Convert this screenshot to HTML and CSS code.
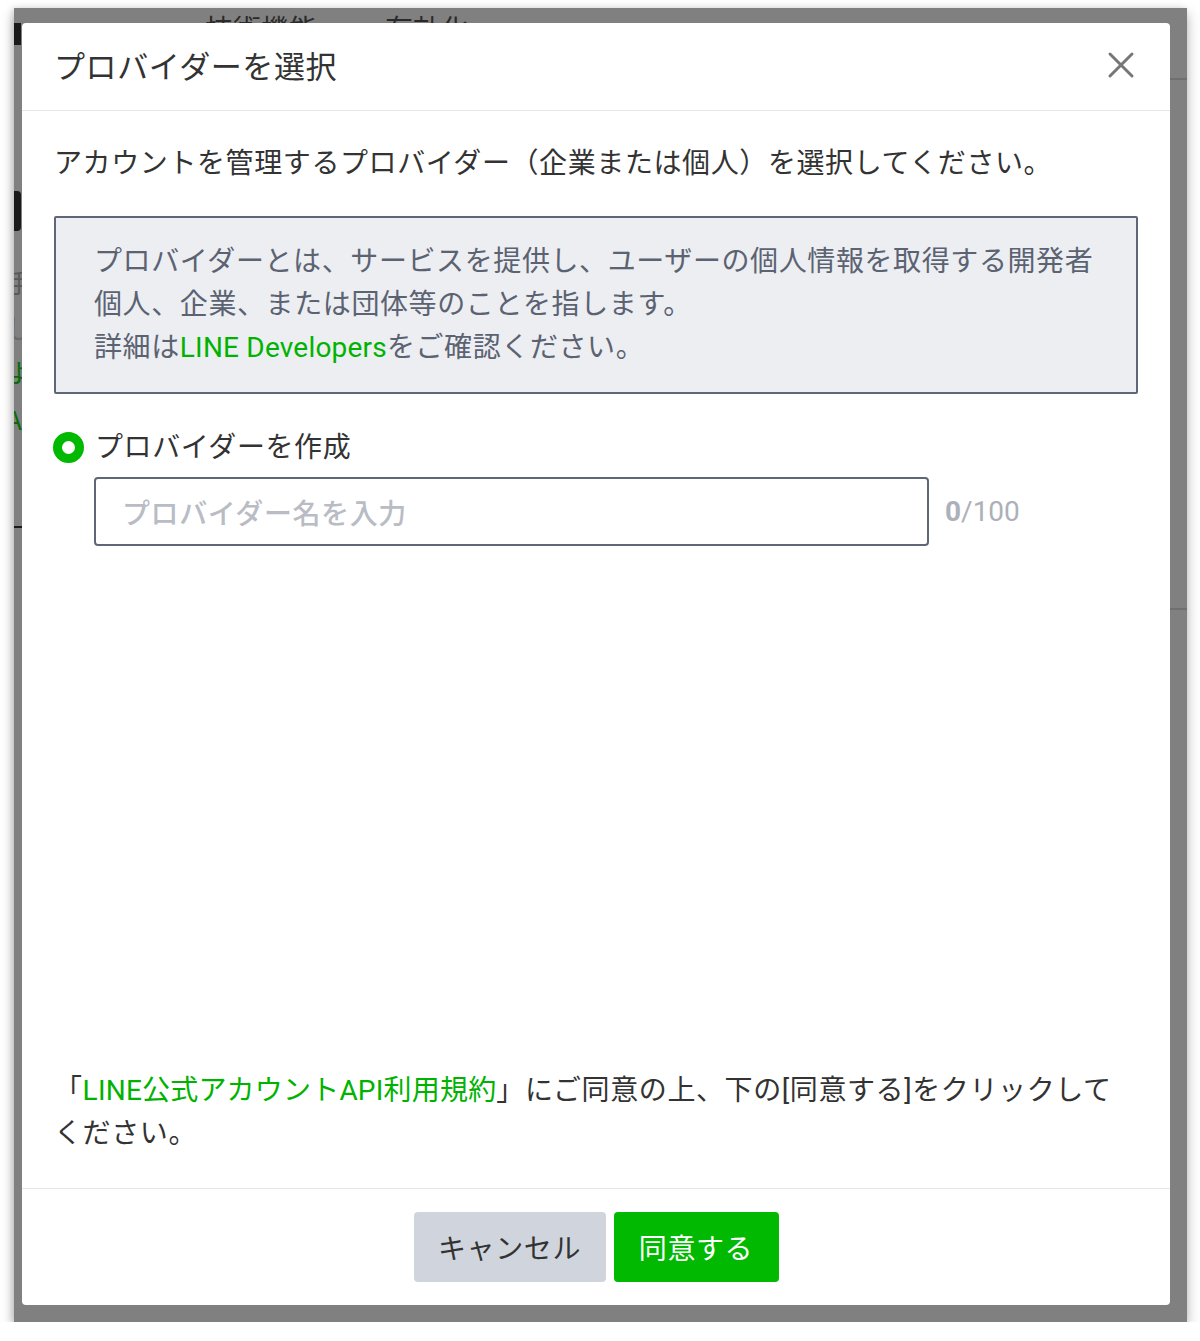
FILE: index.html
```html
<!DOCTYPE html>
<html lang="ja">
<head>
    <meta charset="UTF-8">
    <meta name="viewport" content="width=device-width, initial-scale=1.0">
    <title>プロバイダーを選択</title>
    <link rel="stylesheet" href="styles.css">
</head>
<body>
    <div class="screen">
        <!-- Page under the overlay, mostly hidden by the dialog -->
        <div class="page-behind">
            <div class="bg-header">
                <span class="bg-tab tab-1">技術機能</span>
                <span class="bg-tab tab-2">有効化</span>
            </div>
            <span class="bg-bar bar-1"></span>
            <span class="bg-bar bar-2"></span>
            <span class="bg-text text-1">手</span>
            <span class="bg-text text-2">し</span>
            <span class="bg-link link-1">よ</span>
            <span class="bg-link link-2">A</span>
            <span class="bg-rule rule-1"></span>
            <span class="bg-rule rule-2"></span>
            <span class="bg-rule rule-3"></span>
        </div>

        <div class="modal">
            <!-- Header -->
            <div class="modal-header">
                <h2 class="modal-title">プロバイダーを選択</h2>
                <button class="close-btn" aria-label="閉じる">
                    <svg width="28" height="28" viewBox="0 0 28 28">
                        <path d="M3 3 L25 25 M25 3 L3 25" stroke="#767676" stroke-width="3" stroke-linecap="round" fill="none"/>
                    </svg>
                </button>
            </div>

            <!-- Body -->
            <div class="modal-body">
                <p class="lead">アカウントを管理するプロバイダー（企業または個人）を選択してください。</p>

                <div class="info-box">
                    プロバイダーとは、サービスを提供し、ユーザーの個人情報を取得する開発者<br>
                    個人、企業、または団体等のことを指します。<br>
                    詳細は<a href="#" class="link">LINE Developers</a>をご確認ください。
                </div>

                <label class="radio-row">
                    <span class="radio checked"></span>
                    <span class="radio-label">プロバイダーを作成</span>
                </label>

                <div class="input-row">
                    <input type="text" class="text-input" placeholder="プロバイダー名を入力">
                    <span class="counter"><b>0</b>/100</span>
                </div>

                <p class="terms">「<a href="#" class="link">LINE公式アカウントAPI利用規約</a>」にご同意の上、下の[同意する]をクリックしてください。</p>
            </div>

            <!-- Footer -->
            <div class="modal-footer">
                <button class="btn btn-cancel">キャンセル</button>
                <button class="btn btn-agree">同意する</button>
            </div>
        </div>
    </div>
</body>
</html>
```

FILE: styles.css
```css
body {
    margin: 0;
    padding: 0;
    background: #ffffff;
    font-family: 'Roboto', 'Noto Sans CJK JP', sans-serif;
    color: #333333;
}

/* Dimmed window */
.screen {
    position: relative;
    margin: 8px 0 0 14px;
    width: 1173px;
    height: 1314px;
    box-sizing: border-box;
    padding: 15px 17px 17px 8px;
    background: #808080;
    overflow: hidden;
    box-shadow: 0 6px 12px rgba(0,0,0,0.3), -2px 0 6px rgba(0,0,0,0.12);
}

.page-behind {
    position: absolute;
    inset: 0;
}

.bg-header {
    position: absolute;
    top: 0;
    left: 0;
    right: 0;
    height: 15px;
    overflow: hidden;
}

.bg-tab {
    position: absolute;
    top: 6px;
    font-family: 'Noto Sans CJK JP', sans-serif;
    font-size: 28px;
    line-height: 28px;
    color: #2a2a2a;
}

.tab-1 { left: 191px; }
.tab-2 { left: 371px; }

.bg-bar {
    position: absolute;
    left: 0;
    width: 7px;
    background: #1a1a1a;
}

.bar-1 { top: 15px; height: 22px; }
.bar-2 { top: 183px; height: 40px; border-radius: 0 4px 4px 0; }

.bg-text,
.bg-link {
    position: absolute;
    left: -8px;
    font-family: 'Noto Sans CJK JP', sans-serif;
    font-size: 26px;
    color: #5a5a5a;
}

.text-1 { top: 255px; }
.text-2 { top: 300px; color: #6a6a6a; }

.bg-link { color: #0a6a0a; }
.link-1 { top: 345px; }
.link-2 { top: 392px; }

.bg-rule {
    position: absolute;
    height: 2px;
    background: #6f6f6f;
}

.rule-1 { left: 0; width: 8px; top: 518px; background: #1a1a1a; }
.rule-2 { right: 0; width: 17px; top: 70px; }
.rule-3 { right: 0; width: 17px; top: 600px; }

/* Dialog */
.modal {
    position: relative;
    width: 1148px;
    height: 1282px;
    background: #ffffff;
    border-radius: 4px;
    display: flex;
    flex-direction: column;
}

.modal-header {
    height: 87px;
    padding: 0 32px 0 32px;
    display: flex;
    align-items: center;
    justify-content: space-between;
    border-bottom: 1px solid #e6e7e9;
    flex-shrink: 0;
}

.modal-title {
    margin: 0 0 4px 0;
    font-family: 'Noto Sans CJK JP', sans-serif;
    font-size: 31px;
    font-weight: 400;
    letter-spacing: 0.6px;
    color: #333333;
}

.close-btn {
    background: none;
    border: none;
    padding: 0;
    margin: 0 3px 3px 0;
    width: 28px;
    height: 28px;
    cursor: pointer;
}

.close-btn svg {
    display: block;
}

.modal-body {
    flex: 1;
    display: flex;
    flex-direction: column;
    padding: 31px 32px 0 32px;
    font-size: 28px;
    line-height: 43px;
    letter-spacing: 0.6px;
}

.lead {
    margin: 0;
    color: #333333;
}

.link {
    color: #00b300;
    text-decoration: none;
    letter-spacing: 0.2px;
}

.info-box {
    margin-top: 31px;
    padding: 22px 38px 23px;
    background: #eceef1;
    border: 2px solid #5f6678;
    border-radius: 2px;
    color: #5b6272;
}

.radio-row {
    margin-top: 32px;
    display: flex;
    align-items: center;
    gap: 11px;
    cursor: pointer;
}

.radio {
    width: 31px;
    height: 31px;
    margin-left: -1px;
    box-sizing: border-box;
    border-radius: 50%;
    border: 9px solid #00b900;
    background: #ffffff;
}

.radio-label {
    color: #333333;
}

.input-row {
    margin-top: 8px;
    margin-left: 40px;
    display: flex;
    align-items: center;
    gap: 16px;
}

.text-input {
    width: 835px;
    height: 69px;
    box-sizing: border-box;
    padding: 0 26px;
    border: 2px solid #5f6678;
    border-radius: 4px;
    font-family: 'Noto Sans CJK JP', sans-serif;
    font-size: 28px;
    letter-spacing: 0.6px;
    color: #333333;
    outline: none;
}

.text-input::placeholder {
    color: #b9bcc4;
    font-weight: 500;
}

.counter {
    color: #adb0b8;
    font-size: 28px;
    letter-spacing: 0;
}

.counter b {
    font-weight: 700;
}

.terms {
    margin: auto 0 0 0;
    padding-bottom: 33px;
    color: #333333;
}

.modal-footer {
    flex-shrink: 0;
    border-top: 1px solid #e6e7e9;
    padding: 23px 0;
    display: flex;
    justify-content: center;
    gap: 8px;
}

.btn {
    height: 70px;
    border: none;
    border-radius: 4px;
    padding: 0 20px;
    font-family: 'Noto Sans CJK JP', sans-serif;
    font-size: 28px;
    letter-spacing: 0.6px;
    cursor: pointer;
}

.btn-cancel {
    width: 192px;
    background: #d0d5dd;
    color: #333333;
}

.btn-agree {
    width: 165px;
    background: #00b900;
    color: #ffffff;
}
```
